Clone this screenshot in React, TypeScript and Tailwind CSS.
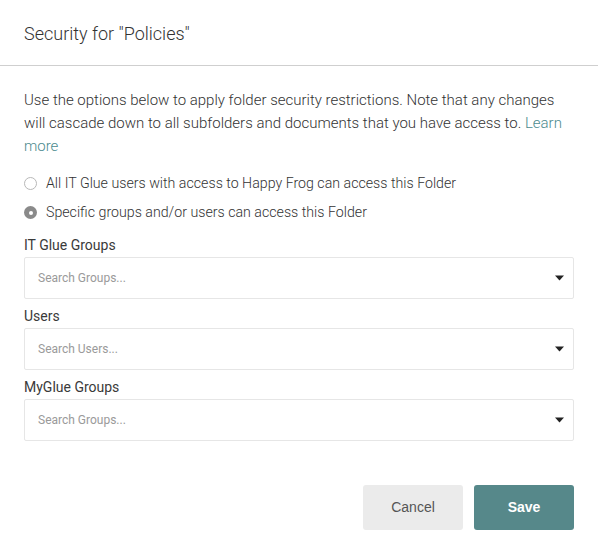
import { useState } from 'react';

const FIELDS = [
  { label: 'IT Glue Groups', placeholder: 'Search Groups...' },
  { label: 'Users', placeholder: 'Search Users...' },
  { label: 'MyGlue Groups', placeholder: 'Search Groups...' },
];

function Radio({ checked }: { checked: boolean }) {
  return checked ? (
    <span className="w-[13px] h-[13px] rounded-full bg-[#8a8a8a] flex items-center justify-center shrink-0">
      <span className="w-[4px] h-[4px] rounded-full bg-white" />
    </span>
  ) : (
    <span className="w-[13px] h-[13px] rounded-full border border-[#b8b8b8] bg-white shrink-0" />
  );
}

function Caret() {
  return (
    <svg width="9" height="6" viewBox="0 0 9 6" className="shrink-0">
      <path d="M0 0.5h9L4.5 5.5z" fill="#222" />
    </svg>
  );
}

export default function App() {
  const [choice, setChoice] = useState<'all' | 'specific'>('specific');

  return (
    <div
      className="w-[598px] h-[555px] bg-white text-[#333] flex flex-col"
      style={{ fontFamily: 'Roboto, "Liberation Sans", sans-serif' }}
    >
      <div className="h-[66px] px-6 flex items-center border-b border-[#cfcfcf]">
        <h1 className="text-[18px] font-light text-[#333] pt-[1px]">Security for "Policies"</h1>
      </div>

      <div className="px-6 pt-[23px]">
        <p className="text-[15px] leading-[23px] font-light">
          Use the options below to apply folder security restrictions. Note that any changes will
          cascade down to all subfolders and documents that you have access to.{' '}
          <a className="text-[#4c8a8e]">Learn more</a>
        </p>

        <div className="mt-[16px] flex flex-col gap-[10px]">
          <label className="flex items-center gap-[9px] h-[19px] text-[14.2px] font-light" onClick={() => setChoice('all')}>
            <Radio checked={choice === 'all'} />
            All IT Glue users with access to Happy Frog can access this Folder
          </label>
          <label className="flex items-center gap-[9px] h-[19px] text-[14.2px] font-light" onClick={() => setChoice('specific')}>
            <Radio checked={choice === 'specific'} />
            Specific groups and/or users can access this Folder
          </label>
        </div>

        <div className="mt-[14px] flex flex-col gap-[8px]">
          {FIELDS.map((f) => (
            <div key={f.label} className="flex flex-col">
              <span className="text-[14px] leading-[18px] font-normal text-[#3a3a3a] mb-[3px]">{f.label}</span>
              <div className="h-[42px] border border-[#e6e6e6] rounded-[2px] flex items-center justify-between pl-[13px] pr-[9px]">
                <span className="text-[12px] text-[#9a9a9a]">{f.placeholder}</span>
                <Caret />
              </div>
            </div>
          ))}
        </div>

        <div
          className="mt-[44px] flex justify-end gap-[11px]"
          style={{ fontFamily: '"Liberation Sans", Arial, sans-serif' }}
        >
          <button className="w-[100px] h-[45px] rounded-[3px] bg-[#ebebeb] text-[#555] text-[14px]">
            Cancel
          </button>
          <button className="w-[100px] h-[45px] rounded-[3px] bg-[#56888a] text-white text-[14px] font-bold">
            Save
          </button>
        </div>
      </div>
    </div>
  );
}
